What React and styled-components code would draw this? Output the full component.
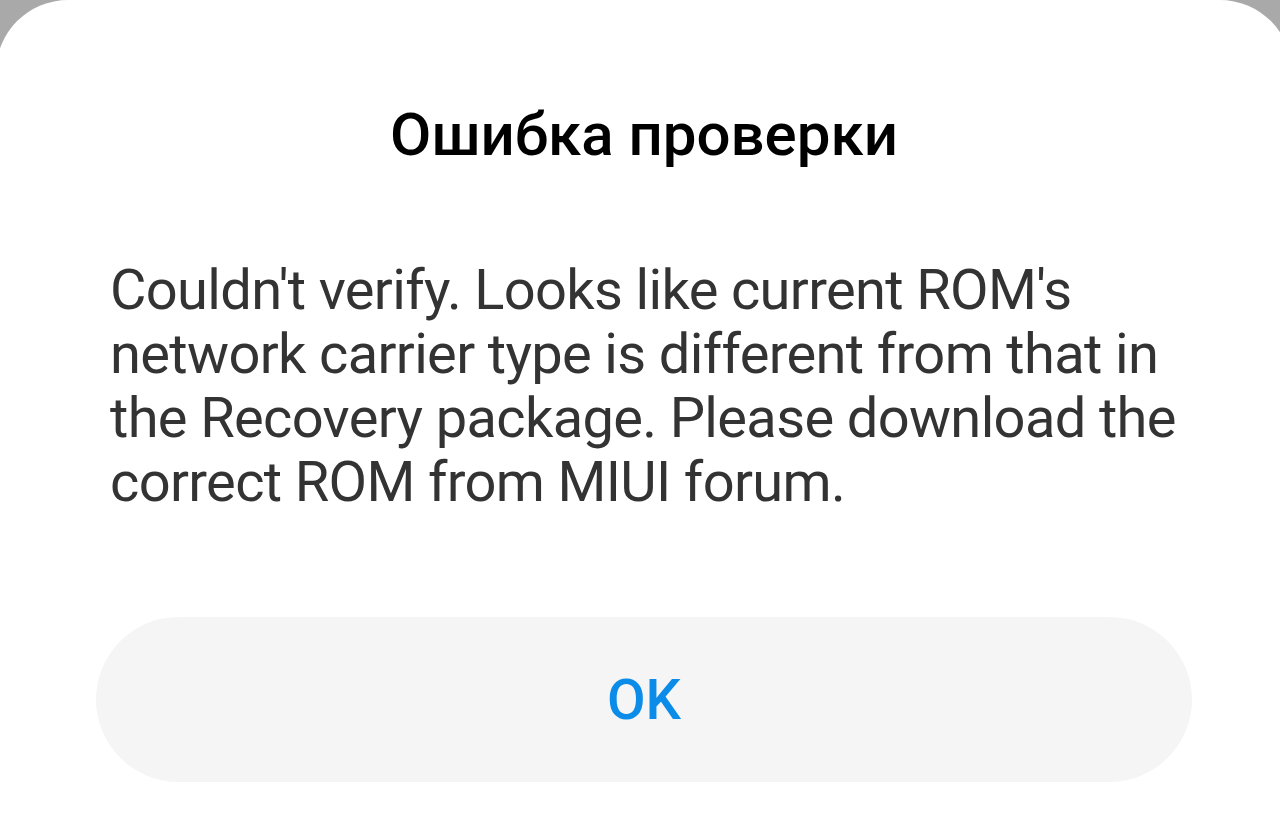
import React from 'react'
import styled, { createGlobalStyle } from 'styled-components'

const GlobalStyle = createGlobalStyle`
  html, body {
    margin: 0;
    padding: 0;
    background: #a9a9a9;
    overflow: hidden;
  }
  #root {
    height: 816px;
  }
`

function App() {
  const onOk = () => {
    console.log('ok');
  }

  return (
    <>
      <GlobalStyle />
      <Dialog>
        <Title>Ошибка проверки</Title>
        <Message>
          Couldn't verify. Looks like current ROM's network carrier type is
          different from that in the Recovery package. Please download the
          correct ROM from MIUI forum.
        </Message>
        <OkButton onClick={onOk}>OK</OkButton>
      </Dialog>
    </>
  )
}

export default App;

const Dialog = styled.div`
    box-sizing: border-box;
    margin-left: -4px;
    width: 1296px;
    height: 816px;
    background-color: white;
    border-radius: 72px 72px 0 0;
    padding: 99px 100px 0;
    display: flex;
    flex-direction: column;
    font-family: Roboto, "Noto Sans", sans-serif;
`

const Title = styled.h1`
    margin: 0;
    font-size: 60px;
    font-weight: 500;
    line-height: 72px;
    color: #000;
    text-align: center;
`

const Message = styled.p`
    margin: 87px 0 0;
    padding: 0 14px;
    font-size: 56px;
    font-weight: 400;
    line-height: 64px;
    letter-spacing: -0.65px;
    color: #333;
`

const OkButton = styled.button`
    margin-top: 103px;
    width: 100%;
    height: 165px;
    border: none;
    border-radius: 83px;
    background-color: #f5f5f5;
    color: #0c8ce9;
    font-family: Roboto, sans-serif;
    font-size: 56px;
    font-weight: 500;
    cursor: pointer;
`
